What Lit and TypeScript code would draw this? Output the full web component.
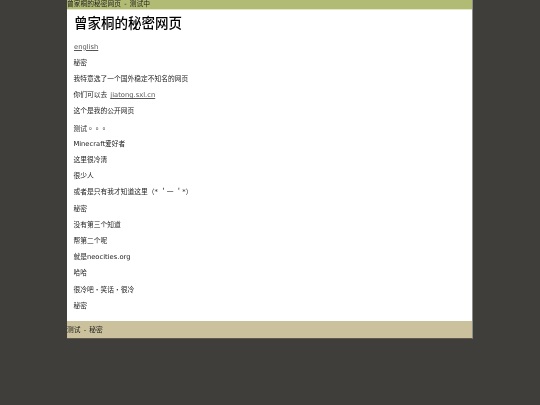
import { LitElement, html, css } from "lit";
import { customElement } from "lit/decorators.js";

const lines: unknown[] = [
  html`<a class="first" href="#">english</a>`,
  "秘密",
  "我特意选了一个国外稳定不知名的网页",
  html`你们可以去 <a class="inline" href="#">jiatong.sxl.cn</a>`,
  "这个是我的公开网页",
  html`测试<span class="tc">。。。</span>`,
  "Minecraft爱好者",
  "这里很冷清",
  "很少人",
  "或者是只有我才知道这里（* ＇一 ＇*）",
  "秘密",
  "没有第三个知道",
  "帮第二个呢",
  "就是neocities.org",
  "哈哈",
  "很冷吧・笑话・很冷",
  "秘密",
];

@customElement("app-root")
export class AppRoot extends LitElement {
  static styles = css`
    :host {
      display: block;
      min-height: 405px;
      background: #3f3e3a;
      font-family: "DejaVu Sans", "Noto Sans CJK SC", sans-serif;
      font-size: 6.75px;
      color: #1c1c1c;
    }
    .page {
      width: 406px;
      margin-left: 67px;
      box-sizing: border-box;
      border-right: 1px solid #8f8f8a;
      border-bottom: 1px solid #5c5a4c;
      background: #fff;
    }
    .top {
      height: 10px;
      line-height: 9px;
      background: #b2bb74;
      border-bottom: 1px solid #e4e8c8;
      box-sizing: border-box;
      white-space: nowrap;
      word-spacing: 1px;
    }
    .gray {
      display: inline-block;
      filter: grayscale(1);
    }
    h1 {
      margin: 0;
      padding: 3px 0 0 7px;
      height: 27px;
      box-sizing: border-box;
      font-family: "Noto Sans CJK SC", sans-serif;
      font-size: 13.5px;
      line-height: 18px;
      font-weight: 500;
      color: #000;
      filter: grayscale(1);
    }
    .body {
      padding: 4.7px 6px 8px 6.4px;
      display: flex;
      flex-direction: column;
      height: 284px;
      box-sizing: border-box;
      filter: grayscale(1);
    }
    .line {
      height: 16.2px;
      line-height: 10px;
      flex: none;
    }
    .tc {
      font-family: "Noto Sans CJK TC", sans-serif;
    }
    a {
      color: #555;
      text-decoration: underline;
    }
    a.first {
      margin-left: 0.6px;
    }
    a.inline {
      margin-left: 1px;
    }
    .foot {
      height: 17px;
      line-height: 18px;
      background: #cbc29d;
      white-space: nowrap;
      word-spacing: 1px;
    }
  `;

  render() {
    return html`
      <div class="page">
        <div class="top"><span class="gray">曾家桐的秘密网页 - 测试中</span></div>
        <h1>曾家桐的秘密网页</h1>
        <div class="body">
          ${lines.map((l) => html`<div class="line">${l}</div>`)}
        </div>
        <div class="foot"><span class="gray">测试 - 秘密</span></div>
      </div>
    `;
  }
}
